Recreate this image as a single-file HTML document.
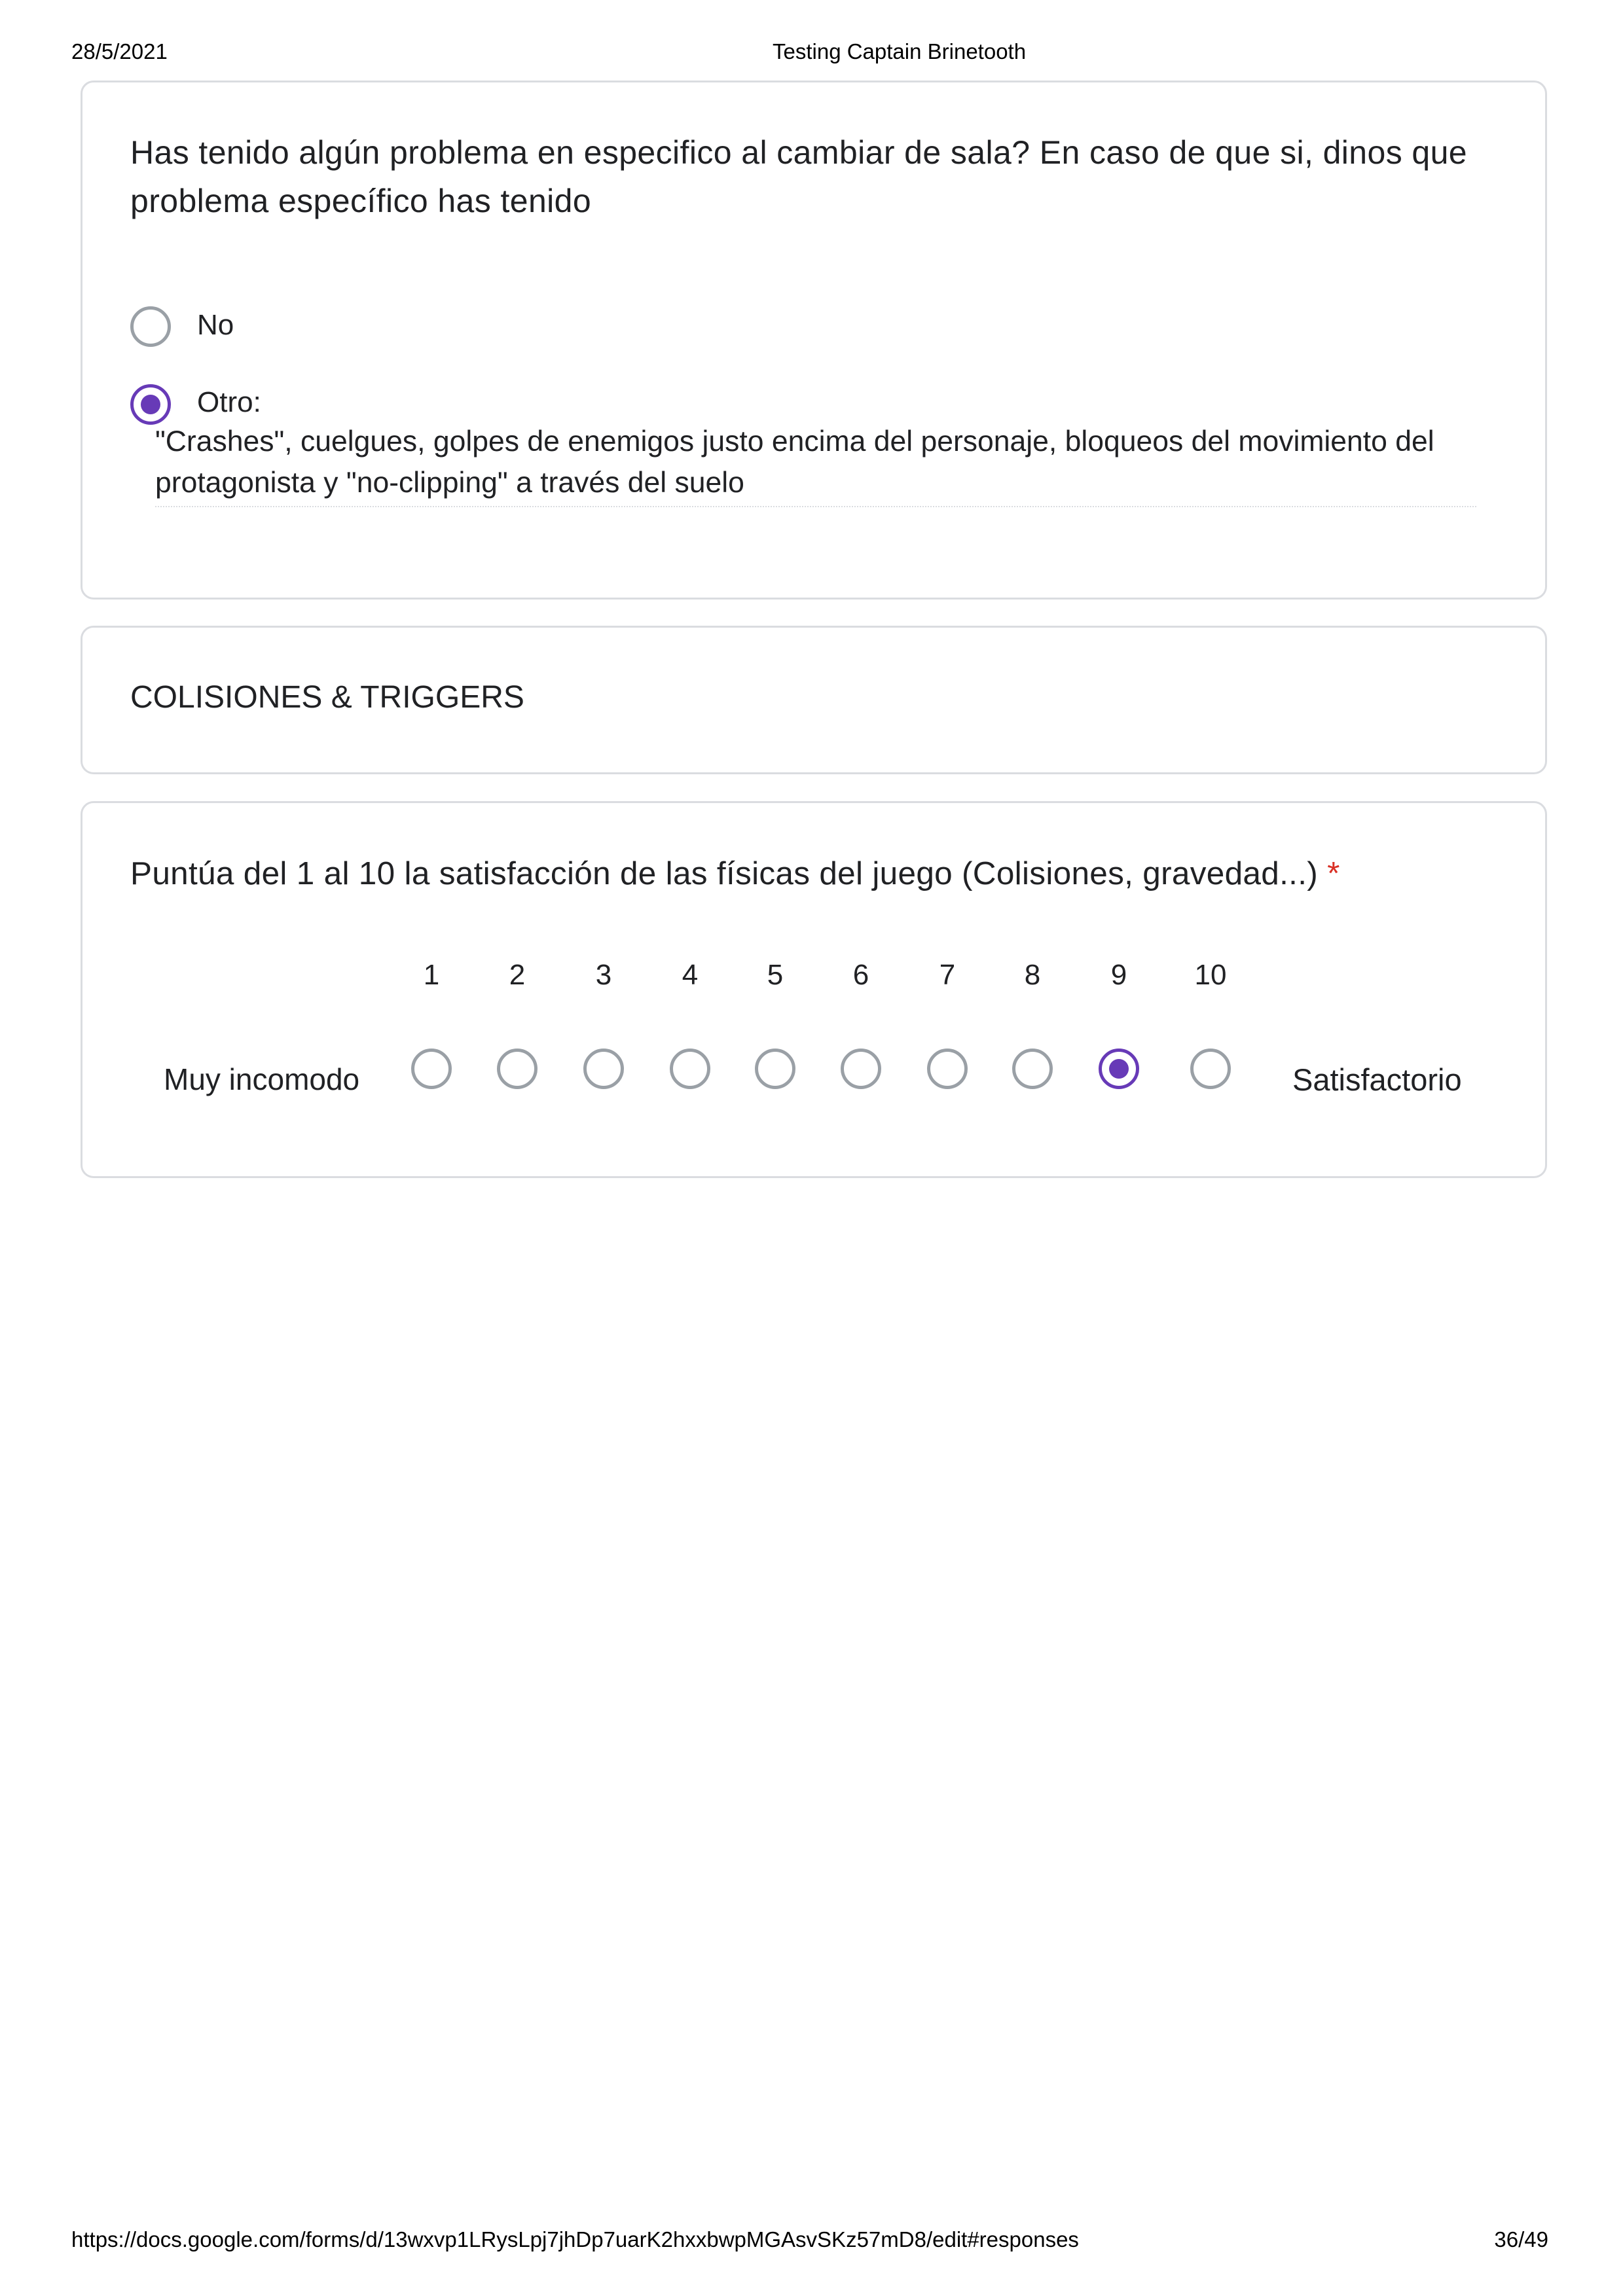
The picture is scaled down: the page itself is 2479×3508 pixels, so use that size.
<!DOCTYPE html>
<html><head><meta charset="utf-8"><style>
body{margin:0;width:2479px;height:3508px;background:#fff;position:relative;font-family:"Liberation Sans",Arial,sans-serif;color:#202124;overflow:hidden}
.a{position:absolute;white-space:nowrap}
.card{position:absolute;left:123px;width:2240px;border:3px solid #dadce0;border-radius:20px;box-sizing:border-box}
.hd{font-size:33px;color:#000}
.q{font-size:50px;letter-spacing:0.4px}
.t{font-size:44px}
.r{position:absolute;width:62px;height:62px;border:5px solid #9aa0a6;border-radius:50%;box-sizing:border-box}
.r.s{border-color:#673ab7}
.r.s::after{content:"";position:absolute;left:11px;top:11px;width:30px;height:30px;border-radius:50%;background:#673ab7}
</style></head><body>
<div class="a hd" style="left:109px;top:60px">28/5/2021</div>
<div class="a hd" style="left:1180px;top:60px">Testing Captain Brinetooth</div>

<div class="card" style="top:123px;height:793px"></div>
<div class="a q" style="left:199px;top:204px">Has tenido algún problema en especifico al cambiar de sala? En caso de que si, dinos que</div>
<div class="a q" style="left:199px;top:278px">problema específico has tenido</div>
<div class="r" style="left:199px;top:468px"></div>
<div class="a t" style="left:301px;top:472px">No</div>
<div class="r s" style="left:199px;top:587px"></div>
<div class="a t" style="left:301px;top:590px">Otro:</div>
<div class="a t" style="left:237px;top:650px;font-size:44.5px">"Crashes", cuelgues, golpes de enemigos justo encima del personaje, bloqueos del movimiento del</div>
<div class="a t" style="left:237px;top:713px;font-size:44.5px">protagonista y "no-clipping" a través del suelo</div>
<div class="a" style="left:237px;top:773px;width:2018px;border-top:2px dotted #dadce0"></div>

<div class="card" style="top:956px;height:227px"></div>
<div class="a q" style="left:199px;top:1038px;font-size:48px;letter-spacing:0">COLISIONES &amp; TRIGGERS</div>

<div class="card" style="top:1224px;height:576px"></div>
<div class="a q" style="left:199px;top:1306px;font-size:49.5px;letter-spacing:0.3px">Puntúa del 1 al 10 la satisfacción de las físicas del juego (Colisiones, gravedad...) <span style="color:#d93025">*</span></div>
<div class="a t" style="left:250px;top:1622px;font-size:46px">Muy incomodo</div>
<div class="a t" style="left:1974px;top:1622px;font-size:47px">Satisfactorio</div>
<div id="sc"></div>
<script>
var xs=[659,790,922,1054,1184,1315,1447,1577,1709,1849],h='';
xs.forEach(function(x,i){h+='<div class="a t" style="left:'+(x-60)+'px;width:120px;text-align:center;top:1465px">'+(i+1)+'</div>';
h+='<div class="r'+(i==8?' s':'')+'" style="left:'+(x-31)+'px;top:1602px"></div>';});
document.getElementById('sc').innerHTML=h;
</script>

<div class="a hd" style="left:109px;top:3403px">https://docs.google.com/forms/d/13wxvp1LRysLpj7jhDp7uarK2hxxbwpMGAsvSKz57mD8/edit#responses</div>
<div class="a hd" style="right:114px;top:3403px">36/49</div>
</body></html>
